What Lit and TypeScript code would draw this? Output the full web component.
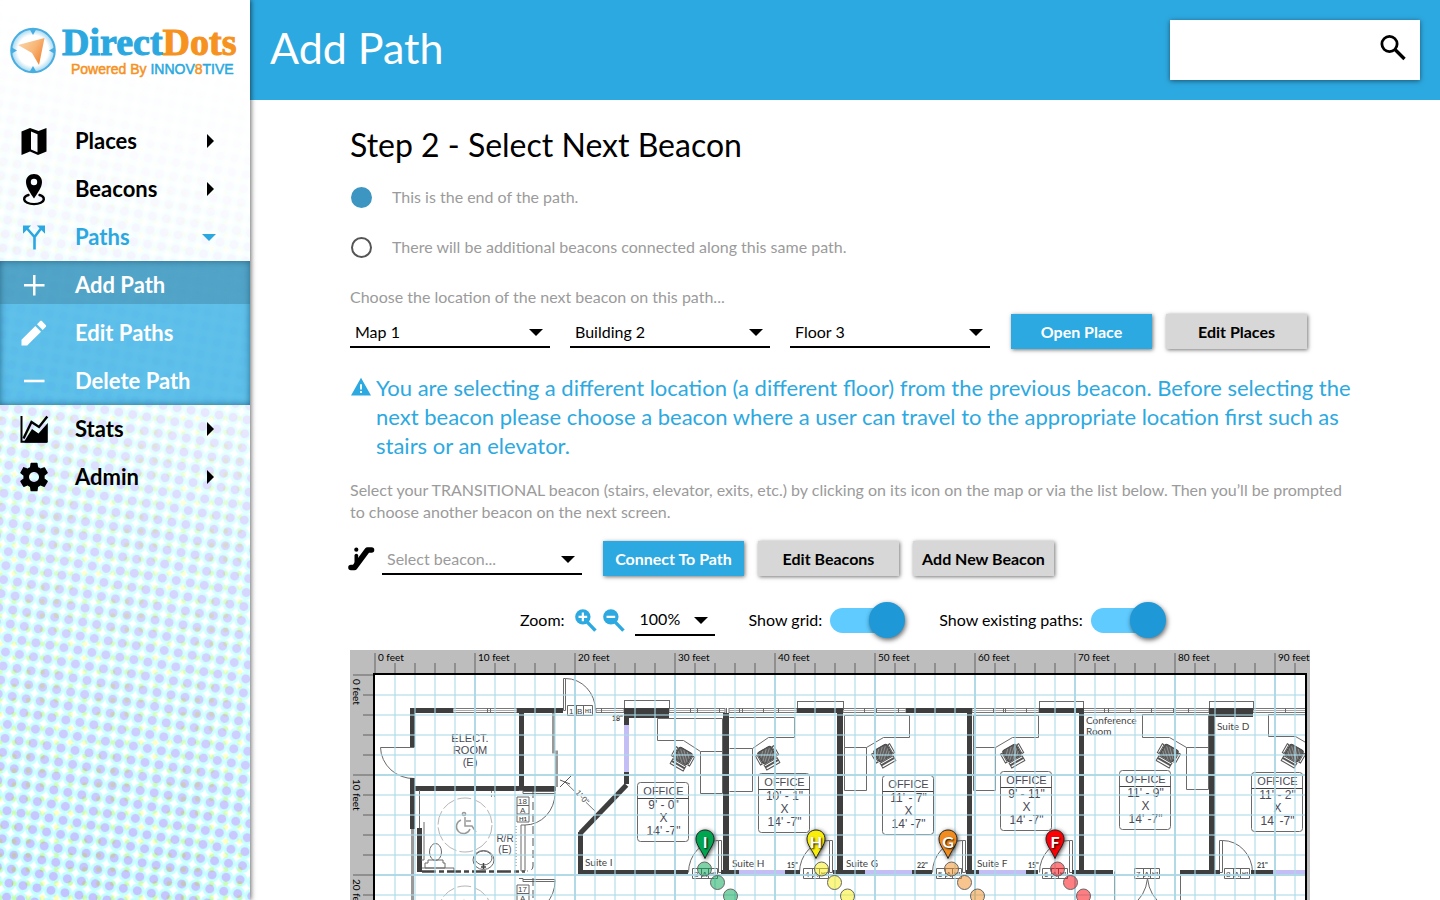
import { LitElement, html, svg, css, nothing } from "lit";
import { customElement, property, state } from "lit/decorators.js";
import { classMap } from "lit/directives/class-map.js";

/* ---------- icons ---------- */

const ICONS: Record<string, unknown> = {
  map: svg`<path fill-rule="evenodd" d="M1.500 4.500 10 1l8.500 3L26.500 1v23.500L18 28l-8-3.500L1.500 28zM11 4.500v18l6.500 2.700v-18z"/>`,
  beacon: svg`<path fill-rule="evenodd" d="M14-1c4.600 0 8 3.500 8 8 0 5.500-4.500 11-8 16.500C10.500 18 6 12.500 6 7c0-4.500 3.400-8 8-8zm0 4.800a3.200 3.200 0 1 0 0 6.400 3.200 3.200 0 0 0 0-6.400z"/><path d="M8.500 20C5.800 20.800 4 22.300 4.200 24.500c.3 2.600 4.500 4.600 9.800 4.600s9.500-2 9.800-4.600c.2-2.200-1.600-3.700-4.300-4.500" fill="none" stroke="currentColor" stroke-width="2.400" stroke-linecap="round"/>`,
  split: svg`<path d="M7 5.500 14.500 14V26.500M21 5.500 14.500 14" fill="none" stroke="currentColor" stroke-width="2.600"/><path d="M3 2.500h8.200L3 10.700zM25 2.500h-8.200L25 10.700z"/>`,
  add: svg`<path d="M13 4h2.500v9h9v2.500h-9v9H13v-9H4V13h9z"/>`,
  edit: svg`<path d="M1.500 21.800v5.700h5.700L21 13.700 15.300 8zM25.700 9c.6-.6.600-1.500 0-2.100l-3.600-3.600c-.6-.6-1.500-.6-2.100 0l-3 3L22.700 12z" transform="translate(0 -1)"/>`,
  remove: svg`<path d="M4 12.700h20.500v2.600H4z"/>`,
  stats: svg`<path d="M1.500 1v25.800H27" fill="none" stroke="currentColor" stroke-width="2"/><path d="M3.500 23.500 11.500 7l7.500 5L27.300 1.500" fill="none" stroke="currentColor" stroke-width="2.400"/><path d="M4.500 26 12 14l6.500 4.500L27.800 8v19.500H4.500z"/>`,
  admin: svg`<path transform="translate(-3 -3) scale(1.420)" d="M19.430 12.980c.04-.32.070-.64.070-.98s-.03-.66-.07-.98l2.110-1.650c.19-.15.240-.42.120-.64l-2-3.460c-.12-.22-.39-.3-.61-.22l-2.490 1c-.52-.4-1.080-.73-1.690-.98l-.38-2.650C14.460 2.180 14.250 2 14 2h-4c-.25 0-.46.180-.49.420l-.38 2.650c-.61.250-1.170.590-1.690.980l-2.490-1c-.23-.09-.49 0-.61.220l-2 3.460c-.13.220-.07.490.120.640l2.110 1.650c-.04.320-.07.650-.07.980s.03.660.070.980l-2.110 1.650c-.19.150-.24.420-.12.640l2 3.460c.12.220.39.300.61.220l2.490-1c.52.400 1.080.730 1.690.980l.38 2.650c.03.240.24.420.49.420h4c.25 0 .46-.18.490-.42l.38-2.650c.61-.25 1.170-.59 1.690-.98l2.490 1c.23.090.49 0 .61-.22l2-3.460c.12-.22.070-.49-.12-.64l-2.110-1.650zM12 15.500c-1.930 0-3.500-1.570-3.500-3.500s1.570-3.500 3.500-3.500 3.500 1.570 3.500 3.500-1.570 3.500-3.500 3.500z"/>`,
  search: svg`<circle cx="10.500" cy="10" r="7.600" fill="none" stroke="currentColor" stroke-width="2.800"/><path d="m16 15.500 9.500 9.500" stroke="currentColor" stroke-width="3.400"/>`,
  warning: svg`<path fill-rule="evenodd" d="M14 1 28 26H0zM12.700 10v7.500h2.600V10zm0 9.500v3h2.600v-3z"/>`,
  stairs: svg`<path d="M4 23.500h3.500L20.500 6h4" fill="none" stroke="currentColor" stroke-width="5.600" stroke-linecap="round" stroke-linejoin="round"/><circle cx="9.300" cy="5.700" r="2.100"/><path d="M7.500 11.500q0-1.700 1.800-1.700t1.900 1.700V17l-3.700 5z"/>`,
  zoomIn: svg`<circle cx="10" cy="10" r="9.800"/><path d="m15 16 11 11.500" stroke="currentColor" stroke-width="4.400"/><path d="M10 4.500v11M4.500 10h11" stroke="#fff" stroke-width="2.800"/>`,
  zoomOut: svg`<circle cx="10" cy="10" r="9.800"/><path d="m15 16 11 11.500" stroke="currentColor" stroke-width="4.400"/><path d="M4.500 10h11" stroke="#fff" stroke-width="2.800"/>`,
};

const icon = (name: string) => html`
  <svg class="icon" viewBox="0 0 28 28" fill="currentColor" aria-hidden="true">${ICONS[name]}</svg>
`;

/* ---------- sidebar ---------- */

interface NavItem {
  label: string;
  icon: string;
  children?: NavItem[];
}

const NAV: NavItem[] = [
  { label: "Places", icon: "map" },
  { label: "Beacons", icon: "beacon" },
  {
    label: "Paths",
    icon: "split",
    children: [
      { label: "Add Path", icon: "add" },
      { label: "Edit Paths", icon: "edit" },
      { label: "Delete Path", icon: "remove" },
    ],
  },
  { label: "Stats", icon: "stats" },
  { label: "Admin", icon: "admin" },
];

@customElement("side-nav")
class SideNav extends LitElement {
  @state() open = "Paths";
  @state() current = "Add Path";

  static styles = css`
    :host {
      display: block;
      position: relative;
      z-index: 2;
      width: 250px;
      flex: none;
      background: #fff;
      box-shadow: 1px 0 5px rgba(0, 0, 0, 0.6);
      font-family: Lato, "Open Sans", sans-serif;
    }
    .dots {
      position: absolute;
      inset: 0;
      width: 100%;
      height: 100%;
      z-index: -1;
    }
    .logo {
      display: flex;
      align-items: center;
      gap: 6px;
      height: 100px;
      padding-left: 10px;
      margin-bottom: 17px;
      text-decoration: none;
      white-space: nowrap;
    }
    .compass {
      width: 46px;
      height: 48px;
      flex: none;
    }
    .name {
      font: bold 38px/38px "Liberation Serif", serif;
      -webkit-text-stroke: 1px;
      display: block;
    }
    .tag {
      display: block;
      font: 14px/16px "Liberation Sans", sans-serif;
      -webkit-text-stroke: 0.500px;
      padding-left: 9px;
    }
    .blue {
      color: #2ba8e0;
    }
    .orange {
      color: #f6921e;
    }
    ul {
      list-style: none;
      margin: 0;
      padding: 0;
    }
    .item {
      display: flex;
      align-items: center;
      gap: 27px;
      height: 48px;
      padding: 0 36px 0 20px;
      color: #000;
      font-size: 22px;
      font-weight: bold;
      text-decoration: none;
    }
    .icon {
      width: 28px;
      height: 28px;
      flex: none;
      overflow: visible;
    }
    .label {
      flex: 1;
    }
    .caret {
      border: 7px solid transparent;
      border-left-color: #000;
      border-right-width: 0;
    }
    .item.expanded {
      color: #2ba8e0;
      padding-right: 34px;
    }
    .expanded .caret {
      border: 7px solid transparent;
      border-top-color: #2ba8e0;
      border-bottom-width: 0;
    }
    .sub {
      background: rgba(56, 176, 229, 0.8);
      box-shadow: inset 0 0 7px rgba(0, 50, 80, 0.6);
    }
    .sub .item {
      color: #fff;
    }
    .sub .current {
      background: linear-gradient(rgba(50, 100, 120, 0.3), rgba(50, 100, 120, 0.3)) 0 0 / 100% 43px no-repeat;
    }
  `;

  private item(i: NavItem, sub = false) {
    const expanded = this.open === i.label && !!i.children;
    return html`
      <li>
        <a
          href="#"
          class=${classMap({ item: true, expanded, current: sub && this.current === i.label })}
        >
          ${icon(i.icon)}<span class="label">${i.label}</span>${sub ? nothing : html`<span class="caret"></span>`}
        </a>
        ${expanded ? html`<ul class="sub">${i.children!.map((c) => this.item(c, true))}</ul>` : nothing}
      </li>
    `;
  }

  render() {
    return html`
      <svg class="dots" aria-hidden="true">
        <defs>
          <pattern id="cm" width="14.200" height="14.200" patternUnits="userSpaceOnUse" patternTransform="translate(8 847) rotate(9.750)">
            <rect width="14.200" height="14.200" fill="#fff" />
            <circle cx="7.100" cy="7.100" r="7.200" fill="#c2ffff" />
            <circle cx="7.100" cy="7.100" r="4.500" fill="#c2c2ff" />
          </pattern>
          <pattern id="yl" width="14.100" height="14.100" patternUnits="userSpaceOnUse" patternTransform="translate(-7 524)">
            <circle cx="7" cy="7" r="2.600" fill="#ffffb8" />
          </pattern>
          <linearGradient id="fade" gradientUnits="userSpaceOnUse" x1="0" y1="900" x2="240" y2="60">
            <stop offset="0" stop-color="#fff" stop-opacity="0" />
            <stop offset="0.450" stop-color="#fff" stop-opacity="0.350" />
            <stop offset="0.620" stop-color="#fff" stop-opacity="0.650" />
            <stop offset="0.750" stop-color="#fff" stop-opacity="0.830" />
            <stop offset="0.900" stop-color="#fff" stop-opacity="0.960" />
            <stop offset="1" stop-color="#fff" />
          </linearGradient>
        </defs>
        <rect width="100%" height="100%" fill="url(#cm)" />
        <rect width="100%" height="100%" fill="url(#yl)" style="mix-blend-mode:multiply" />
        <rect width="100%" height="100%" fill="url(#fade)" />
      </svg>
      <a class="logo" href="#">
        <svg class="compass" viewBox="0 0 46 48" aria-hidden="true">
          <defs>
            <radialGradient id="ring">
              <stop offset="0.700" stop-color="#fff" />
              <stop offset="1" stop-color="#9dd5ef" />
            </radialGradient>
            <linearGradient id="needle" x1="0" y1="0" x2="1" y2="0.600">
              <stop offset="0" stop-color="#fbd9b0" />
              <stop offset="0.600" stop-color="#f8b778" />
              <stop offset="1" stop-color="#f28a3c" />
            </linearGradient>
          </defs>
          <circle cx="23" cy="24.500" r="21.800" fill="url(#ring)" stroke="#48ade0" stroke-width="2" />
          <path d="M19.500 3h7L23 9zM19.500 46h7L23 40zM1 21v7L7 24.500zM45 21v7L39 24.500z" fill="#48ade0" />
          <path d="M8 19 34.500 12 29 39 22 27z" fill="url(#needle)" />
        </svg>
        <span>
          <span class="name"><span class="blue">Direct</span><span class="orange">Dots</span></span>
          <span class="tag"><span class="orange">Powered By </span><span class="blue">INNOV</span><span class="orange">8</span><span class="blue">TIVE</span></span>
        </span>
      </a>
      <nav><ul>${NAV.map((i) => this.item(i))}</ul></nav>
    `;
  }
}

/* ---------- floor plan ---------- */

const WALLS = [
  [410, 708, 43, 5], [517, 708, 46, 5], [410, 708, 5, 39], [410, 778, 5, 51], [414, 786, 142, 5],
  [519, 713, 5, 74], [417, 828, 5, 44], [578, 832, 5, 42], [624, 708, 45, 10], [624, 715, 5, 10],
  [624, 772, 5, 12], [723, 713, 6, 160], [797, 708, 46, 5], [837, 713, 6, 160], [906, 708, 66, 5],
  [967, 713, 5, 160], [1039, 708, 44, 5], [1079, 708, 5, 165], [1209, 708, 44, 9], [1209, 713, 6, 160],
  [578, 870, 110, 4], [721, 870, 18, 4], [785, 870, 15, 4], [833, 870, 32, 4], [912, 870, 20, 4],
  [966, 870, 13, 4], [1026, 870, 12, 4], [1072, 870, 41, 4], [1180, 870, 40, 4], [1251, 870, 22, 4],
];
const GLASS = [
  [624, 725, 5, 47], [739, 870, 46, 4], [865, 870, 47, 4], [979, 870, 47, 4], [1273, 870, 33, 4],
];
const WINDOWS = [
  [453, 517], [596, 624], [669, 725], [729, 797], [843, 906], [972, 1039], [1083, 1209], [1253, 1306],
];
const LEDGES = [[624, 700, 45], [797, 701, 46], [1039, 701, 44], [1209, 701, 44]];
const MULLIONS = [487, 490, 601, 690, 697, 719, 726, 739, 742, 763, 778, 864, 876, 898, 993, 1003, 1005, 1026, 1104, 1108, 1130, 1151, 1173, 1188, 1285];
const DESKS = [
  "M657 718h65v75h-22v-42h22M700 751l-17-11h-26v-22",
  "M729 717h65v20h-26l-16 11h-23M752 748v43h-23",
  "M844 715h65v22h-26l-17 10h-22zM866 747v43h-22v-43",
  "M973 715h65v22h-26l-17 10h-22zM995 747v43h-22v-43",
  "M1142 714h66v75h-22v-42h22M1186 747l-17-10h-27v-23",
  "M1308 714h-40v22h27l12 7",
];
const CHAIRS: [number, number, number][] = [
  [682, 757, 1], [768, 756, -1], [884, 754, -1], [1013, 754, -1], [1168, 754, 1], [1293, 754, 1],
];
const OFFICES: [number, number, string, string][] = [
  [637, 782, "9' - 0\"", "14' -7\""], [758, 773, "10' - 1\"", "14' -7\""], [882, 775, "11' - 7\"", "14' -7\""],
  [1000, 771, "9' - 11\"", "14' -7\""], [1119, 770, "11' - 9\"", "14' -7\""], [1251, 772, "11' - 2\"", "14' -7\""],
];
const SUITES: [number, number, string][] = [
  [585, 866, "Suite I"], [732, 867, "Suite H"], [846, 867, "Suite G"], [977, 867, "Suite F"],
  [1217, 730, "Suite D"], [1086, 724, "Conference"], [1086, 735, "Room"],
];
const WIDTHS: [number, number, string][] = [
  [612, 721, "18\""], [787, 868, "15\""], [917, 868, "22\""], [1028, 868, "15\""], [1257, 868, "21\""],
];
const TAGS: [number, number, string][] = [
  [567, 705, "1B"], [692, 868, "3A"], [803, 868, "4A"], [936, 868, "5A"], [1042, 868, "6A"], [1134, 868, "7A"], [1224, 868, "8A"],
];
const DOORS = [
  "M718 840a30 32 0 0 0-30 32M718 840h3v32h-3z",
  "M829 840a30 32 0 0 0-30 32M829 840h3v32h-3z",
  "M962 840a30 32 0 0 0-30 32M962 840h3v32h-3z",
  "M1069 840a30 32 0 0 0-30 32M1069 840h3v32h-3z",
  "M1222 840a30 32 0 0 1 30 32M1219 840h3v32h-3z",
  "M563 678v32h2v-32zM565 678a30 32 0 0 1 30 32",
  "M380 747h34M380 747a33 32 0 0 0 34 31",
  "M1114 871v40M1180 871v40M1147 878q-2 18-16 27M1147 878q2 18 16 27",
];
const BEACONS: { letter: string; x: number; color: string; trail: number }[] = [
  { letter: "I", x: 705, color: "#00a550", trail: 704 },
  { letter: "H", x: 816, color: "#f9ee0a", trail: 821 },
  { letter: "G", x: 948, color: "#f28c1e", trail: 951 },
  { letter: "F", x: 1055, color: "#fb0005", trail: 1057 },
];
const range = (from: number, to: number, step: number) =>
  Array.from({ length: Math.floor((to - from) / step) + 1 }, (_, i) => from + i * step);

@customElement("floor-map")
class FloorMap extends LitElement {
  @property({ type: Boolean }) grid = true;
  @property({ type: Boolean }) paths = true;

  static styles = css`
    :host {
      display: block;
      overflow: hidden;
    }
    .plan {
      display: block;
      width: 100%;
      max-width: 960px;
      min-width: 640px;
    }
    .wall {
      fill: #3e3e3e;
    }
    .glass {
      fill: #c3bef5;
    }
    .thin {
      fill: none;
      stroke: #6a6a6a;
    }
    .window {
      fill: #fff;
      stroke: #777;
    }
    .minor {
      stroke: #add8e6;
      stroke-opacity: 0.550;
      stroke-width: 2;
    }
    .major {
      stroke: #a9d6e3;
      stroke-opacity: 0.900;
      stroke-width: 2;
    }
    .ruler {
      font: 10px Lato, "Open Sans", sans-serif;
    }
    .room {
      font: 11px "Liberation Sans", sans-serif;
      fill: #4a4a55;
      text-anchor: middle;
    }
    .size {
      font-size: 12px;
    }
    .suite {
      font: 10px Lato, sans-serif;
      fill: #444;
    }
    .tiny {
      font: bold 7px Lato, sans-serif;
      fill: #444;
    }
    .tag {
      font: 8px "Liberation Sans", sans-serif;
      fill: #444;
    }
    .letter {
      font: bold 16px Lato, sans-serif;
      fill: #fff;
      text-anchor: middle;
      text-shadow: 1px 1px 2px #000;
    }
    .pin {
      filter: drop-shadow(1px 1px 2px rgba(0, 0, 0, 0.7));
    }
  `;

  private washroom(dy: number, num: string) {
    return svg`
      <g transform="translate(0 ${dy})">
        <circle class="thin" cx="465" cy="825" r="27" stroke-dasharray="14 3" style="stroke:#b5b5b5"/>
        <g fill="none" stroke="#999" stroke-width="1.500">
          <circle cx="464" cy="814" r="1.600"/>
          <path d="M465 817v9h7l4 6M461 820a7 7 0 1 0 9 9M466 821h5"/>
        </g>
        <path d="M517 797h12v25h-12zM517 805.500h12M517 814h12" fill="#fff" stroke="#666"/>
        <text class="tag" x="518" y="804">${num}</text>
        <text class="tag" x="520" y="813">A</text>
        <text class="tiny" x="519" y="821" style="font-size:6px">H1</text>
        <path class="thin" d="M519 790.500h4v3h32v-2h-32M555 793a30 32 0 0 1-30 32M521 825h4v46h-4z"/>
        <path d="M533 790v76q0 5-6 5" fill="none" stroke="#555" stroke-dasharray="8 4"/>
        <path d="M516 826v42" stroke="#777" stroke-dasharray="1 2"/>
      </g>`;
  }

  private plan() {
    return svg`
      ${WINDOWS.map(([a, b]) => svg`<rect class="window" x=${a} y="708.500" width=${b - a} height="4"/><path class="thin" d="M${a} 710.500H${b}" style="stroke:#aaa"/>`)}
      ${MULLIONS.map((x) => svg`<path class="thin" d="M${x}.500 708v5"/>`)}
      ${LEDGES.map(([x, y, w]) => svg`<rect class="thin" x=${x + 0.5} y=${y + 0.5} width=${w} height="8"/>`)}
      ${DESKS.map((d) => svg`<path class="thin" d=${d} transform="translate(.5 .5)"/>`)}
      ${DOORS.map((d) => svg`<path class="thin" d=${d} transform="translate(.5 .5)"/>`)}
      ${CHAIRS.map(([x, y, s]) => svg`
        <g transform="translate(${x} ${y}) scale(${s} 1) rotate(30)">
          <rect x="-7" y="-8" width="15" height="13" rx="2" fill="#5d5d5d" stroke="#444"/>
          <path d="M-5-6 6 4M-2-7 7 2M-6-3 3 5M-6 0-2 4M2-7 7-2" stroke="#999" stroke-width=".8"/>
          <path d="M-10-6h2v10h-2zM9-6h2v10H9zM-7 6H8v2H-7zM-7 9H8v2.500H-7z" fill="#fff" stroke="#555"/>
        </g>`)}
      ${WALLS.map(([x, y, w, h]) => svg`<rect class="wall" x=${x} y=${y} width=${w} height=${h}/>`)}
      ${GLASS.map(([x, y, w, h]) => svg`<rect class="glass" x=${x} y=${y} width=${w} height=${h}/>`)}
      <path d="M580.500 833 626.500 785" stroke="#3e3e3e" stroke-width="5"/>
      <path d="M553.500 713v39h3v35" fill="none" stroke="#999" stroke-width="3"/>
      <path d="M412.500 829v72" stroke="#999" stroke-width="3"/>
      <path class="thin" d="M419.500 790v38M424 822v38h-3M422 868h32v3"/>
      <path d="M422 871.500h103" stroke="#444" stroke-width="2.500" stroke-dasharray="14 3 5 3"/>
      <path class="thin" d="M428 860h15v3h2v5h-20v-5h3z"/>
      <ellipse class="thin" cx="435.500" cy="852" rx="6" ry="8.500"/>
      <ellipse class="thin" cx="483.500" cy="860" rx="10.500" ry="9.500"/>
      <ellipse class="thin" cx="483.500" cy="858" rx="8.500" ry="7"/>
      <path d="M481 867h5M483.500 863v6" stroke="#444" stroke-width="1.500"/>
      <path d="M491.500 791v6M494.500 791v6" stroke="#888" stroke-dasharray="2 2"/>
      ${this.washroom(0, "18")} ${this.washroom(88, "17")}
      <path d="M565 782l32 31" stroke="#777" stroke-dasharray="13 16"/>
      <path d="M560 787l11-11M560 780l10 4" stroke="#555"/>
      <text class="tag" transform="translate(575 793) rotate(48)">1'-0"</text>
      ${OFFICES.map(([x, y, w, d]) => svg`
        <g transform="translate(${x + 0.5} ${y + 0.5})">
          <rect class="thin" width="51" height="59" rx="3"/>
          <path class="thin" d="M0 16h51" style="stroke:#444"/>
          <text class="room" x="26" y="12">OFFICE</text>
          <text class="room size" x="26" y="26">${w}</text>
          <text class="room size" x="26" y="39">X</text>
          <text class="room size" x="26" y="52">${d}</text>
        </g>`)}
      <text class="room" x="470" y="742">ELECT.</text>
      <text class="room" x="470" y="754">ROOM</text>
      <text class="room" x="470" y="766">(E)</text>
      <text class="room" x="505" y="842" style="font-size:10px">R/R</text>
      <text class="room" x="505" y="853" style="font-size:10px">(E)</text>
      ${TAGS.map(([x, y, t]) => svg`
        <path d="M${x}.500 ${y}.500h25v10h-25zM${x + 9}.500 ${y}v10M${x + 16}.500 ${y}v10" fill="#fff" stroke="#666"/>
        <text class="tag" x=${x + 2} y=${y + 9}>${t[0]}</text>
        <text class="tag" x=${x + 10} y=${y + 9}>${t[1]}</text>
        <text class="tiny" x=${x + 18} y=${y + 8} style="font-size:5px">H1</text>`)}
      ${SUITES.map(([x, y, t]) => svg`<text class="suite" x=${x} y=${y}>${t}</text>`)}
      ${WIDTHS.map(([x, y, t]) => svg`<text class="tiny" x=${x} y=${y}>${t}</text>`)}
    `;
  }

  render() {
    const tens = range(0, 90, 10);
    return html`
      <svg class="plan" viewBox="350 650 960 280" role="img" aria-label="Floor 3 plan">
        <defs><clipPath id="sheet"><rect x="375" y="675" width="930" height="260" /></clipPath></defs>
        <rect x="350" y="650" width="960" height="280" fill="#bdbdbd" />
        <g stroke="#8f8f8f" stroke-width="2">
          ${range(375, 1300, 20).map((x) => svg`<path d="M${x} ${(x - 375) % 100 ? 663 : 653}V673"/>`)}
          ${range(675, 935, 20).map((y) => svg`<path d="M${(y - 675) % 100 ? 363 : 353} ${y}H373"/>`)}
        </g>
        <rect x="374" y="674" width="932" height="270" fill="#fff" stroke="#000" stroke-width="2" />
        <g class="ruler">
          ${tens.map((t) => svg`<text x=${378 + t * 10} y="661">${t} feet</text>`)}
          ${[0, 10, 20].map((t) => svg`<text transform="translate(353 ${679 + t * 10}) rotate(90)">${t} feet</text>`)}
        </g>
        <g clip-path="url(#sheet)">
          ${this.plan()}
          ${this.grid
            ? svg`
              ${range(395, 1300, 20).map((x) => svg`<path class=${(x - 375) % 100 ? "minor" : "major"} d="M${x} 675V935"/>`)}
              ${range(695, 935, 20).map((y) => svg`<path class=${(y - 675) % 100 ? "minor" : "major"} d="M375 ${y}H1305"/>`)}`
            : nothing}
          ${BEACONS.map((b) => svg`
            ${this.paths
              ? [0, 1, 2].map((i) => svg`<circle cx=${b.trail + i * 13 + 0.5} cy=${869 + i * 13.5} r="7" fill=${b.color} fill-opacity=".5" stroke="#666"/>`)
              : nothing}
            <path class="pin" transform="translate(${b.x} 830)" d="M0 0c5.500 0 9 4 9 9 0 6-6 12-9 19.500C-3 21-9 15-9 9c0-5 3.500-9 9-9z" fill=${b.color} stroke="#222"/>
            <text class="letter" x=${b.x} y="848">${b.letter}</text>`)}
        </g>
      </svg>
    `;
  }
}

/* ---------- page ---------- */

@customElement("app-root")
class AppRoot extends LitElement {
  @state() end = true;
  @state() grid = true;
  @state() existing = true;

  static styles = css`
    * {
      box-sizing: border-box;
    }
    :host {
      display: flex;
      height: 100vh;
      overflow: hidden;
      background: #fff;
      color: #000;
      font: 16px/22px Lato, "Open Sans", sans-serif;
    }
    .main {
      flex: 1;
      min-width: 0;
    }
    .bar {
      display: flex;
      align-items: center;
      justify-content: space-between;
      height: 100px;
      padding: 0 20px;
      background: #2da9e1;
    }
    h1 {
      margin: 0;
      padding-bottom: 4px;
      color: #fff;
      font-size: 43px;
      line-height: 60px;
      font-weight: normal;
    }
    .search {
      display: flex;
      align-items: center;
      width: 250px;
      height: 60px;
      padding: 0 13px 4px 16px;
      background: #fff;
      box-shadow: 0 1px 5px rgba(0, 0, 0, 0.5);
    }
    .search input {
      flex: 1;
      min-width: 0;
      border: 0;
      outline: 0;
      background: none;
      font: inherit;
    }
    .icon {
      width: 28px;
      height: 28px;
      flex: none;
      overflow: visible;
    }
    .content {
      padding: 22px 80px 0 100px;
    }
    h2 {
      margin: 0 0 4px;
      font-size: 32px;
      line-height: 46px;
      font-weight: normal;
    }
    .choice {
      display: flex;
      align-items: center;
      gap: 20px;
      height: 50px;
      padding-left: 1px;
      color: #9b9b9b;
    }
    .choice input {
      appearance: none;
      width: 21px;
      height: 21px;
      margin: 0;
      border: 2px solid #555;
      border-radius: 50%;
    }
    .choice input:checked {
      border-color: #3d96c1;
      background: #3d96c1;
    }
    p {
      margin: 0;
      color: #9b9b9b;
    }
    .hint {
      padding: 14px 0 6px;
    }
    .row {
      display: flex;
      gap: 20px;
    }
    .buttons {
      display: flex;
      gap: 14px;
      margin-left: 1px;
    }
    .pick {
      display: flex;
      align-items: center;
      position: relative;
      width: 200px;
      height: 34px;
      border-bottom: 2px solid #000;
    }
    .pick::after {
      content: "";
      position: absolute;
      top: 15px;
      right: 7px;
      border: 7px solid transparent;
      border-top-color: #000;
      border-bottom: 0;
      pointer-events: none;
    }
    .pick.short {
      width: 80px;
      height: 32px;
    }
    .pick.short::after {
      top: 13px;
    }
    select {
      appearance: none;
      width: 100%;
      height: 100%;
      padding: 4px 24px 0 5px;
      border: 0;
      outline: 0;
      background: none;
      color: #000;
      font: inherit;
    }
    select.empty {
      color: #9b9b9b;
    }
    select.short {
      padding-top: 0;
    }
    button {
      padding: 0;
      border: 0;
      background: none;
      font: inherit;
      color: inherit;
      cursor: pointer;
    }
    .btn {
      width: 141px;
      height: 35px;
      background: #d7d7d7;
      box-shadow: 1px 1px 4px rgba(0, 0, 0, 0.55);
      font-weight: bold;
      white-space: nowrap;
    }
    .btn.primary {
      background: #2da9e1;
      color: #fff;
    }
    .alert {
      display: flex;
      gap: 5px;
      margin: 24px 0 19px;
      color: #2da9e1;
      font-size: 22px;
      line-height: 29px;
    }
    .alert .icon {
      width: 20px;
      height: 20px;
      margin: 4px 0 0 1px;
    }
    .alert p {
      color: inherit;
    }
    .beacon {
      align-items: start;
      margin-top: 18px;
    }
    .where {
      display: flex;
      align-items: center;
      gap: 7px;
      margin-left: -3px;
    }
    .tools {
      display: flex;
      align-items: center;
      gap: 10px;
      height: 36px;
      margin: 26px 0 12px;
      padding-left: 170px;
      white-space: nowrap;
    }
    .tools .icon {
      display: block;
      width: 22px;
      height: 22px;
    }
    .zooms {
      display: flex;
      gap: 6px;
    }
    .switch {
      display: flex;
      align-items: center;
      gap: 8px;
      margin-left: 24px;
    }
    .switch input {
      appearance: none;
      display: grid;
      align-items: center;
      width: 75px;
      height: 36px;
      margin: 0;
    }
    .switch input::before,
    .switch input::after {
      content: "";
      grid-area: 1 / 1;
    }
    .switch input::before {
      height: 25px;
      width: 68px;
      border-radius: 13px;
      background: #5fcbff;
    }
    .switch input::after {
      width: 36px;
      height: 36px;
      border-radius: 50%;
      background: #1e98d7;
      box-shadow: 1px 2px 5px rgba(0, 0, 0, 0.6);
    }
    .switch input:checked::after {
      justify-self: end;
    }
  `;

  private pick(label: string, value: string, cls = "") {
    return html`
      <span class="pick ${cls}">
        <select class=${cls} aria-label=${label}><option>${value}</option></select>
      </span>
    `;
  }

  private blue(name: string) {
    return html`<svg class="icon" viewBox="0 0 28 28" fill="#2da9e1" color="#2da9e1" aria-hidden="true">${ICONS[name]}</svg>`;
  }

  render() {
    return html`
      <side-nav></side-nav>
      <div class="main">
        <header class="bar">
          <h1>Add Path</h1>
          <label class="search"><input type="search" aria-label="Search" />${icon("search")}</label>
        </header>
        <main class="content">
          <h2>Step 2 - Select Next Beacon</h2>
          <label class="choice">
            <input type="radio" name="next" .checked=${this.end} @change=${() => (this.end = true)} />
            This is the end of the path.
          </label>
          <label class="choice">
            <input type="radio" name="next" .checked=${!this.end} @change=${() => (this.end = false)} />
            There will be additional beacons connected along this same path.
          </label>
          <p class="hint">Choose the location of the next beacon on this path...</p>
          <div class="row">
            ${this.pick("Map", "Map 1")} ${this.pick("Building", "Building 2")} ${this.pick("Floor", "Floor 3")}
            <div class="buttons">
              <button class="btn primary">Open Place</button>
              <button class="btn">Edit Places</button>
            </div>
          </div>
          <div class="alert" role="alert">
            ${icon("warning")}
            <p>
              You are selecting a different location (a different floor) from the previous beacon. Before selecting the
              next beacon please choose a beacon where a user can travel to the appropriate location first such as
              stairs or an elevator.
            </p>
          </div>
          <p>
            Select your TRANSITIONAL beacon (stairs, elevator, exits, etc.) by clicking on its icon on the map or via
            the list below. Then you’ll be prompted to choose another beacon on the next screen.
          </p>
          <div class="row beacon">
            <div class="where">${icon("stairs")} ${this.pick("Beacon", "Select beacon...", "empty")}</div>
            <div class="buttons">
              <button class="btn primary">Connect To Path</button>
              <button class="btn">Edit Beacons</button>
              <button class="btn">Add New Beacon</button>
            </div>
          </div>
          <div class="tools">
            <span>Zoom:</span>
            <span class="zooms">
              <button aria-label="Zoom in">${this.blue("zoomIn")}</button>
              <button aria-label="Zoom out">${this.blue("zoomOut")}</button>
            </span>
            ${this.pick("Zoom level", "100%", "short")}
            <label class="switch">
              Show grid:
              <input
                type="checkbox"
                .checked=${this.grid}
                @change=${(e: Event) => (this.grid = (e.target as HTMLInputElement).checked)}
              />
            </label>
            <label class="switch">
              Show existing paths:
              <input
                type="checkbox"
                .checked=${this.existing}
                @change=${(e: Event) => (this.existing = (e.target as HTMLInputElement).checked)}
              />
            </label>
          </div>
          <floor-map .grid=${this.grid} .paths=${this.existing}></floor-map>
        </main>
      </div>
    `;
  }
}
